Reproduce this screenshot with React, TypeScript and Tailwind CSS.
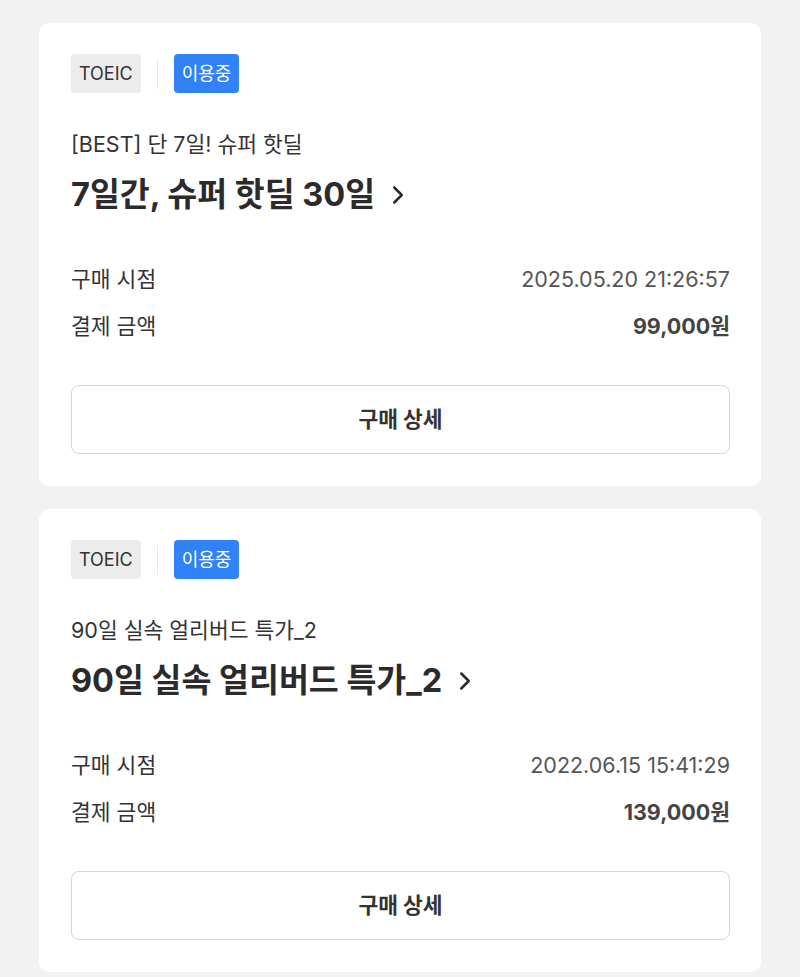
import { ChevronRight } from 'lucide-react';

interface Purchase {
  category: string;
  status: string;
  subtitle: string;
  title: string;
  purchasedAt: string;
  price: string;
}

const purchases: Purchase[] = [
  {
    category: 'TOEIC',
    status: '이용중',
    subtitle: '[BEST] 단 7일! 슈퍼 핫딜',
    title: '7일간, 슈퍼 핫딜 30일',
    purchasedAt: '2025.05.20 21:26:57',
    price: '99,000원',
  },
  {
    category: 'TOEIC',
    status: '이용중',
    subtitle: '90일 실속 얼리버드 특가_2',
    title: '90일 실속 얼리버드 특가_2',
    purchasedAt: '2022.06.15 15:41:29',
    price: '139,000원',
  },
];

function PurchaseCard({ item }: { item: Purchase }) {
  return (
    <div className="bg-white rounded-[10px] pt-[31px] pb-[32px] pl-[32px] pr-[31px]">
      {/* Tags */}
      <div className="flex items-center">
        <span className="h-[39px] px-[8px] flex items-center rounded-[4px] bg-[#ececec] text-[#333] text-[18px]">
          {item.category}
        </span>
        <span className="mx-[16px] w-px h-[30px] bg-[#e8e8e8]" />
        <span className="h-[39px] px-[8px] flex items-center rounded-[4px] bg-[#3182f6] text-white text-[18px]">
          {item.status}
        </span>
      </div>

      <p className="mt-[37px] text-[21.5px] leading-[28px] text-[#333]">{item.subtitle}</p>
      <button className="mt-[17px] flex items-center text-[32.5px] leading-[40px] font-bold text-[#2b2b2b]">
        {item.title}
        <ChevronRight className="ml-[8px] w-[30px] h-[30px]" strokeWidth={2} />
      </button>

      {/* Purchase info */}
      <div className="mt-[50px] flex flex-col gap-[19px] text-[21.5px] leading-[28px]">
        <div className="flex justify-between">
          <span className="text-[#333]">구매 시점</span>
          <span className="text-[#555]">{item.purchasedAt}</span>
        </div>
        <div className="flex justify-between">
          <span className="text-[#333]">결제 금액</span>
          <span className="font-bold text-[#444]">{item.price}</span>
        </div>
      </div>

      <button className="mt-[45px] w-full h-[69px] rounded-[8px] border border-[#d6d6d6] bg-white text-[21.5px] font-bold text-[#333]">
        구매 상세
      </button>
    </div>
  );
}

export default function App() {
  return (
    <div
      className="min-h-screen bg-[#f2f2f2] px-[39px] pt-[23px] pb-[5px] flex flex-col gap-[23px]"
      style={{ fontFamily: 'Inter, "Noto Sans CJK KR", sans-serif' }}
    >
      {purchases.map((item, i) => (
        <PurchaseCard key={i} item={item} />
      ))}
    </div>
  );
}
